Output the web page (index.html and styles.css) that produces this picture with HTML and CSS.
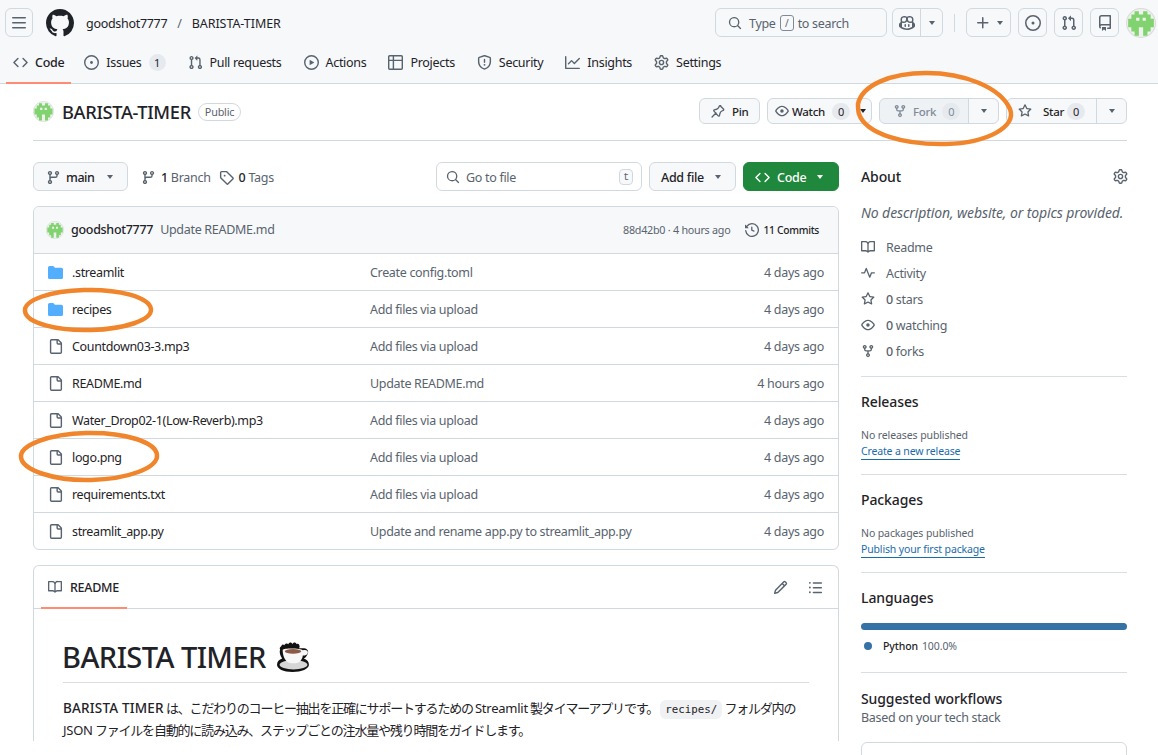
FILE: index.html
```html
<!DOCTYPE html>
<html lang="en">
<head>
<meta charset="utf-8">
<title>BARISTA-TIMER</title>
<link rel="stylesheet" href="styles.css">
</head>
<body>
<svg class="sprite" width="0" height="0" aria-hidden="true">
<defs>
<symbol id="i-bars" viewBox="0 0 16 16"><path d="M1 2.75A.75.75 0 0 1 1.75 2h12.5a.75.75 0 0 1 0 1.5H1.75A.75.75 0 0 1 1 2.75Zm0 5A.75.75 0 0 1 1.75 7h12.5a.75.75 0 0 1 0 1.5H1.75A.75.75 0 0 1 1 7.75ZM1.75 12h12.5a.75.75 0 0 1 0 1.5H1.75a.75.75 0 0 1 0-1.5Z"/></symbol>
<symbol id="i-github" viewBox="0 0 16 16"><path d="M8 0c4.42 0 8 3.58 8 8a8.013 8.013 0 0 1-5.45 7.59c-.4.08-.55-.17-.55-.38 0-.27.01-1.13.01-2.2 0-.75-.25-1.23-.54-1.48 1.78-.2 3.65-.88 3.65-3.95 0-.88-.31-1.59-.82-2.15.08-.2.36-1.02-.08-2.12 0 0-.67-.22-2.2.82-.64-.18-1.32-.27-2-.27-.68 0-1.36.09-2 .27-1.53-1.03-2.2-.82-2.2-.82-.44 1.1-.16 1.92-.08 2.12-.51.56-.82 1.28-.82 2.15 0 3.06 1.86 3.75 3.64 3.95-.23.2-.44.55-.51 1.07-.46.21-1.61.55-2.33-.66-.15-.24-.6-.83-1.23-.82-.67.01-.27.38.01.53.34.19.73.9.82 1.13.16.45.68 1.31 2.69.94 0 .67.01 1.3.01 1.49 0 .21-.15.45-.55.38A7.995 7.995 0 0 1 0 8c0-4.42 3.58-8 8-8Z"/></symbol>
<symbol id="i-code" viewBox="0 0 16 16"><path d="m11.28 3.22 4.25 4.25a.75.75 0 0 1 0 1.06l-4.25 4.25a.749.749 0 0 1-1.275-.326.749.749 0 0 1 .215-.734L13.94 8l-3.72-3.72a.749.749 0 0 1 .326-1.275.749.749 0 0 1 .734.215Zm-6.56 0a.751.751 0 0 1 1.042.018.751.751 0 0 1 .018 1.042L2.06 8l3.72 3.72a.749.749 0 0 1-.326 1.275.749.749 0 0 1-.734-.215L.47 8.53a.75.75 0 0 1 0-1.06Z"/></symbol>
<symbol id="i-issue" viewBox="0 0 16 16"><path d="M8 9.5a1.5 1.5 0 1 0 0-3 1.5 1.5 0 0 0 0 3Z"/><path d="M8 0a8 8 0 1 1 0 16A8 8 0 0 1 8 0ZM1.5 8a6.5 6.5 0 1 0 13 0 6.5 6.5 0 0 0-13 0Z"/></symbol>
<symbol id="i-pr" viewBox="0 0 16 16"><path d="M1.5 3.25a2.25 2.25 0 1 1 3 2.122v5.256a2.251 2.251 0 1 1-1.5 0V5.372A2.25 2.25 0 0 1 1.5 3.25Zm5.677-.177L9.573.677A.25.25 0 0 1 10 .854V2.5h1A2.5 2.5 0 0 1 13.5 5v5.628a2.251 2.251 0 1 1-1.5 0V5a1 1 0 0 0-1-1h-1v1.646a.25.25 0 0 1-.427.177L7.177 3.427a.25.25 0 0 1 0-.354ZM3.75 2.5a.75.75 0 1 0 0 1.5.75.75 0 0 0 0-1.5Zm0 9.5a.75.75 0 1 0 0 1.5.75.75 0 0 0 0-1.5Zm8.25.75a.75.75 0 1 0 1.5 0 .75.75 0 0 0-1.5 0Z"/></symbol>
<symbol id="i-play" viewBox="0 0 16 16"><path d="M8 0a8 8 0 1 1 0 16A8 8 0 0 1 8 0ZM1.5 8a6.5 6.5 0 1 0 13 0 6.5 6.5 0 0 0-13 0Zm4.879-2.773 4.264 2.559a.25.25 0 0 1 0 .428l-4.264 2.559A.25.25 0 0 1 6 10.559V5.442a.25.25 0 0 1 .379-.215Z"/></symbol>
<symbol id="i-table" viewBox="0 0 16 16"><path d="M0 1.75C0 .784.784 0 1.75 0h12.5C15.216 0 16 .784 16 1.75v12.5A1.75 1.75 0 0 1 14.25 16H1.75A1.75 1.75 0 0 1 0 14.25ZM6.5 6.5v8h7.75a.25.25 0 0 0 .25-.25V6.5Zm8-1.5V1.75a.25.25 0 0 0-.25-.25H6.5V5Zm-13 1.5v7.75c0 .138.112.25.25.25H5v-8ZM5 5V1.5H1.75a.25.25 0 0 0-.25.25V5Z"/></symbol>
<symbol id="i-shield" viewBox="0 0 16 16"><path d="M7.467.133a1.748 1.748 0 0 1 1.066 0l5.25 1.68A1.75 1.75 0 0 1 15 3.48V7c0 1.566-.32 3.182-1.303 4.682-.983 1.498-2.585 2.813-5.032 3.855a1.697 1.697 0 0 1-1.33 0c-2.447-1.042-4.049-2.357-5.032-3.855C1.32 10.182 1 8.566 1 7V3.48a1.75 1.75 0 0 1 1.217-1.667Zm.61 1.429a.25.25 0 0 0-.153 0l-5.25 1.68a.25.25 0 0 0-.174.238V7c0 1.358.275 2.666 1.057 3.86.784 1.194 2.121 2.34 4.366 3.297a.196.196 0 0 0 .154 0c2.245-.956 3.582-2.104 4.366-3.298C13.225 9.666 13.5 8.36 13.5 7V3.48a.251.251 0 0 0-.174-.237l-5.25-1.68ZM8.75 4.75v3a.75.75 0 0 1-1.5 0v-3a.75.75 0 0 1 1.5 0ZM9 10.5a1 1 0 1 1-2 0 1 1 0 0 1 2 0Z"/></symbol>
<symbol id="i-graph" viewBox="0 0 16 16"><path d="M1.5 1.75V13.5h13.75a.75.75 0 0 1 0 1.5H.75a.75.75 0 0 1-.75-.75V1.75a.75.75 0 0 1 1.5 0Zm14.28 2.53-5.25 5.25a.75.75 0 0 1-1.06 0L7 7.06 4.28 9.78a.751.751 0 0 1-1.042-.018.751.751 0 0 1-.018-1.042l3.25-3.25a.75.75 0 0 1 1.06 0L10 7.94l4.72-4.72a.751.751 0 0 1 1.042.018.751.751 0 0 1 .018 1.042Z"/></symbol>
<symbol id="i-gear" viewBox="0 0 16 16"><path d="M8 0a8.2 8.2 0 0 1 .701.031C9.444.095 9.99.645 10.16 1.29l.288 1.107c.018.066.079.158.212.224.231.114.454.243.668.386.123.082.233.09.299.071l1.103-.303c.644-.176 1.392.021 1.82.63.27.385.506.792.704 1.218.315.675.111 1.422-.364 1.891l-.814.806c-.049.048-.098.147-.088.294.016.257.016.515 0 .772-.01.147.038.246.088.294l.814.806c.475.469.679 1.216.364 1.891a7.977 7.977 0 0 1-.704 1.217c-.428.61-1.176.807-1.82.63l-1.102-.302c-.067-.019-.177-.011-.3.071a5.909 5.909 0 0 1-.668.386c-.133.066-.194.158-.211.224l-.29 1.106c-.168.646-.715 1.196-1.458 1.26a8.006 8.006 0 0 1-1.402 0c-.743-.064-1.289-.614-1.458-1.26l-.289-1.106c-.018-.066-.079-.158-.212-.224a5.738 5.738 0 0 1-.668-.386c-.123-.082-.233-.09-.299-.071l-1.103.303c-.644.176-1.392-.021-1.82-.63a8.12 8.12 0 0 1-.704-1.218c-.315-.675-.111-1.422.363-1.891l.815-.806c.05-.048.098-.147.088-.294a6.214 6.214 0 0 1 0-.772c.01-.147-.038-.246-.088-.294l-.815-.806C.635 6.045.431 5.298.746 4.623a7.92 7.92 0 0 1 .704-1.217c.428-.61 1.176-.807 1.82-.63l1.102.302c.067.019.177.011.3-.071.214-.143.437-.272.668-.386.133-.066.194-.158.211-.224l.29-1.106C6.009.645 6.556.095 7.299.03 7.53.01 7.764 0 8 0Zm-.571 1.525c-.036.003-.108.036-.137.146l-.289 1.105c-.147.561-.549.967-.998 1.189-.173.086-.34.183-.5.29-.417.278-.97.423-1.529.27l-1.103-.303c-.109-.03-.175.016-.195.045-.22.312-.412.644-.573.99-.014.031-.021.11.059.19l.815.806c.411.406.562.957.53 1.456a4.709 4.709 0 0 0 0 .582c.032.499-.119 1.05-.53 1.456l-.815.806c-.081.08-.073.159-.059.19.162.346.353.677.573.989.02.03.085.076.195.046l1.102-.303c.56-.153 1.113-.008 1.53.27.161.107.328.204.501.29.447.222.85.629.997 1.189l.289 1.105c.029.109.101.143.137.146a6.6 6.6 0 0 0 1.142 0c.036-.003.108-.036.137-.146l.289-1.105c.147-.561.549-.967.998-1.189.173-.086.34-.183.5-.29.417-.278.97-.423 1.529-.27l1.103.303c.109.029.175-.016.195-.045.22-.313.411-.644.573-.99.014-.031.021-.11-.059-.19l-.815-.806c-.411-.406-.562-.957-.53-1.456a4.709 4.709 0 0 0 0-.582c-.032-.499.119-1.05.53-1.456l.815-.806c.081-.08.073-.159.059-.19a6.464 6.464 0 0 0-.573-.989c-.02-.03-.085-.076-.195-.046l-1.102.303c-.56.153-1.113.008-1.53-.27a4.44 4.44 0 0 0-.501-.29c-.447-.222-.85-.629-.997-1.189l-.289-1.105c-.029-.11-.101-.143-.137-.146a6.6 6.6 0 0 0-1.142 0ZM11 8a3 3 0 1 1-6 0 3 3 0 0 1 6 0ZM9.5 8a1.5 1.5 0 1 0-3.001.001A1.5 1.5 0 0 0 9.5 8Z"/></symbol>
<symbol id="i-search" viewBox="0 0 16 16"><path d="M10.68 11.74a6 6 0 0 1-7.922-8.982 6 6 0 0 1 8.982 7.922l3.04 3.04a.749.749 0 0 1-.326 1.275.749.749 0 0 1-.734-.215ZM11.5 7a4.499 4.499 0 1 0-8.997 0A4.499 4.499 0 0 0 11.5 7Z"/></symbol>
<symbol id="i-plus" viewBox="0 0 16 16"><path d="M7.75 2a.75.75 0 0 1 .75.75V7h4.25a.75.75 0 0 1 0 1.5H8.5v4.25a.75.75 0 0 1-1.5 0V8.5H2.75a.75.75 0 0 1 0-1.5H7V2.75A.75.75 0 0 1 7.75 2Z"/></symbol>
<symbol id="i-repo" viewBox="0 0 16 16"><path d="M2 2.5A2.5 2.5 0 0 1 4.5 0h8.75a.75.75 0 0 1 .75.75v12.5a.75.75 0 0 1-.75.75h-2.5a.75.75 0 0 1 0-1.5h1.75v-2h-8a1 1 0 0 0-.714 1.7.75.75 0 1 1-1.072 1.05A2.495 2.495 0 0 1 2 11.5Zm10.5-1h-8a1 1 0 0 0-1 1v6.708A2.486 2.486 0 0 1 4.5 9h8ZM5 12.25a.25.25 0 0 1 .25-.25h3.5a.25.25 0 0 1 .25.25v3.25a.25.25 0 0 1-.4.2l-1.45-1.087a.249.249 0 0 0-.3 0L5.4 15.7a.25.25 0 0 1-.4-.2Z"/></symbol>
<symbol id="i-pin" viewBox="0 0 16 16"><path fill="none" stroke="currentColor" stroke-width="1.5" stroke-linecap="round" stroke-linejoin="round" d="M1.2 14.8 5.7 10.3M10.2 1.8l4 4c.5.5.4 1.3-.3 1.6l-1.4.6c-1.1.5-1.9 1.5-2.2 2.6l-.6 2.5c-.2.7-1 .9-1.5.4L3.4 8.1c-.5-.5-.3-1.3.4-1.5l2.5-.6c1.1-.3 2.1-1.1 2.6-2.2l.6-1.4c.3-.7 1.1-.8 1.7-.4Z"/></symbol>
<symbol id="i-eye" viewBox="0 0 16 16"><path d="M8 2c1.981 0 3.671.992 4.933 2.078 1.27 1.091 2.187 2.345 2.637 3.023a1.62 1.62 0 0 1 0 1.798c-.45.678-1.367 1.932-2.637 3.023C11.67 13.008 9.981 14 8 14c-1.981 0-3.671-.992-4.933-2.078C1.797 10.83.88 9.576.43 8.898a1.62 1.62 0 0 1 0-1.798c.45-.677 1.367-1.931 2.637-3.022C4.33 2.992 6.019 2 8 2ZM1.679 7.932a.12.12 0 0 0 0 .136c.411.622 1.241 1.75 2.366 2.717C5.176 11.758 6.527 12.5 8 12.5c1.473 0 2.825-.742 3.955-1.715 1.124-.967 1.954-2.096 2.366-2.717a.12.12 0 0 0 0-.136c-.412-.621-1.242-1.75-2.366-2.717C10.824 4.242 9.473 3.5 8 3.5c-1.473 0-2.825.742-3.955 1.715-1.124.967-1.954 2.096-2.366 2.717ZM8 10a2 2 0 1 1-.001-3.999A2 2 0 0 1 8 10Z"/></symbol>
<symbol id="i-fork" viewBox="0 0 16 16"><path d="M5 5.372v.878c0 .414.336.75.75.75h4.5a.75.75 0 0 0 .75-.75v-.878a2.25 2.25 0 1 1 1.5 0v.878a2.25 2.25 0 0 1-2.25 2.25h-1.5v2.128a2.251 2.251 0 1 1-1.5 0V8.5h-1.5A2.25 2.25 0 0 1 3.5 6.25v-.878a2.25 2.25 0 1 1 1.5 0ZM5 3.25a.75.75 0 1 0-1.5 0 .75.75 0 0 0 1.5 0Zm6.75.75a.75.75 0 1 0 0-1.5.75.75 0 0 0 0 1.5Zm-3 8.75a.75.75 0 1 0-1.5 0 .75.75 0 0 0 1.5 0Z"/></symbol>
<symbol id="i-star" viewBox="0 0 16 16"><path d="M8 .25a.75.75 0 0 1 .673.418l1.882 3.815 4.21.612a.75.75 0 0 1 .416 1.279l-3.046 2.97.719 4.192a.751.751 0 0 1-1.088.791L8 12.347l-3.766 1.98a.75.75 0 0 1-1.088-.79l.72-4.194L.818 6.374a.75.75 0 0 1 .416-1.28l4.21-.611L7.327.668A.75.75 0 0 1 8 .25Zm0 2.445L6.615 5.5a.75.75 0 0 1-.564.41l-3.097.45 2.24 2.184a.75.75 0 0 1 .216.664l-.528 3.084 2.769-1.456a.75.75 0 0 1 .698 0l2.77 1.456-.53-3.084a.75.75 0 0 1 .216-.664l2.24-2.183-3.096-.45a.75.75 0 0 1-.564-.41L8 2.694Z"/></symbol>
<symbol id="i-branch" viewBox="0 0 16 16"><path d="M9.5 3.25a2.25 2.25 0 1 1 3 2.122V6A2.5 2.5 0 0 1 10 8.5H6a1 1 0 0 0-1 1v1.128a2.251 2.251 0 1 1-1.5 0V5.372a2.25 2.25 0 1 1 1.5 0v1.836A2.493 2.493 0 0 1 6 7h4a1 1 0 0 0 1-1v-.628A2.25 2.25 0 0 1 9.5 3.25Zm-6 0a.75.75 0 1 0 1.5 0 .75.75 0 0 0-1.5 0Zm8.25-.75a.75.75 0 1 0 0 1.5.75.75 0 0 0 0-1.5ZM4.25 12a.75.75 0 1 0 0 1.5.75.75 0 0 0 0-1.5Z"/></symbol>
<symbol id="i-tag" viewBox="0 0 16 16"><path d="M1 7.775V2.75C1 1.784 1.784 1 2.75 1h5.025c.464 0 .91.184 1.238.513l6.25 6.25a1.75 1.75 0 0 1 0 2.474l-5.026 5.026a1.75 1.75 0 0 1-2.474 0l-6.25-6.25A1.752 1.752 0 0 1 1 7.775Zm1.5 0c0 .066.026.13.073.177l6.25 6.25a.25.25 0 0 0 .354 0l5.025-5.025a.25.25 0 0 0 0-.354l-6.25-6.25a.25.25 0 0 0-.177-.073H2.75a.25.25 0 0 0-.25.25ZM6 5a1 1 0 1 1 0 2 1 1 0 0 1 0-2Z"/></symbol>
<symbol id="i-history" viewBox="0 0 16 16"><path d="m.427 1.927 1.215 1.215a8.002 8.002 0 1 1-1.6 5.685.75.75 0 1 1 1.493-.154 6.5 6.5 0 1 0 1.18-4.458l1.358 1.358A.25.25 0 0 1 3.896 6H.25A.25.25 0 0 1 0 5.75V2.104a.25.25 0 0 1 .427-.177ZM7.75 4a.75.75 0 0 1 .75.75v2.992l2.028.812a.75.75 0 0 1-.557 1.392l-2.5-1A.751.751 0 0 1 7 8.25v-3.5A.75.75 0 0 1 7.75 4Z"/></symbol>
<symbol id="i-folder" viewBox="0 0 16 16"><path d="M1.75 1A1.75 1.75 0 0 0 0 2.75v10.5C0 14.216.784 15 1.75 15h12.5A1.75 1.75 0 0 0 16 13.25v-8.5A1.75 1.75 0 0 0 14.25 3H7.5a.25.25 0 0 1-.2-.1l-.9-1.2C6.07 1.26 5.55 1 5 1H1.75Z"/></symbol>
<symbol id="i-file" viewBox="0 0 16 16"><path d="M2 1.75C2 .784 2.784 0 3.75 0h6.586c.464 0 .909.184 1.237.513l2.914 2.914c.329.328.513.773.513 1.237v9.586A1.75 1.75 0 0 1 13.25 16h-9.5A1.75 1.75 0 0 1 2 14.25Zm1.75-.25a.25.25 0 0 0-.25.25v12.5c0 .138.112.25.25.25h9.5a.25.25 0 0 0 .25-.25V6h-2.75A1.75 1.75 0 0 1 9 4.25V1.5Zm6.75.062V4.25c0 .138.112.25.25.25h2.688l-.011-.013-2.914-2.914-.013-.011Z"/></symbol>
<symbol id="i-book" viewBox="0 0 16 16"><path d="M0 1.75A.75.75 0 0 1 .75 1h4.253c1.227 0 2.317.59 3 1.501A3.743 3.743 0 0 1 11.006 1h4.245a.75.75 0 0 1 .75.75v10.5a.75.75 0 0 1-.75.75h-4.507a2.25 2.25 0 0 0-1.591.659l-.622.621a.75.75 0 0 1-1.06 0l-.622-.621A2.25 2.25 0 0 0 5.258 13H.75a.75.75 0 0 1-.75-.75Zm7.251 10.324.004-5.073-.002-2.253A2.25 2.25 0 0 0 5.003 2.5H1.5v9h3.757a3.75 3.75 0 0 1 1.994.574ZM8.755 4.75l-.004 7.322a3.752 3.752 0 0 1 1.992-.572H14.5v-9h-3.495a2.25 2.25 0 0 0-2.25 2.25Z"/></symbol>
<symbol id="i-pulse" viewBox="0 0 16 16"><path d="M6 2c.306 0 .582.187.696.471L10 10.731l1.304-3.26A.751.751 0 0 1 12 7h3.25a.75.75 0 0 1 0 1.5h-2.742l-1.812 4.528a.751.751 0 0 1-1.392 0L6 4.77 4.696 8.03A.75.75 0 0 1 4 8.5H.75a.75.75 0 0 1 0-1.5h2.742l1.812-4.529A.751.751 0 0 1 6 2Z"/></symbol>
<symbol id="i-pencil" viewBox="0 0 16 16"><path d="M11.013 1.427a1.75 1.75 0 0 1 2.474 0l1.086 1.086a1.75 1.75 0 0 1 0 2.474l-8.61 8.61c-.21.21-.47.364-.756.445l-3.251.93a.75.75 0 0 1-.927-.928l.929-3.25c.081-.286.235-.547.445-.758l8.61-8.61Zm.176 4.823L9.75 4.81l-6.286 6.287a.253.253 0 0 0-.064.108l-.558 1.953 1.953-.558a.253.253 0 0 0 .108-.064Zm1.238-3.763a.25.25 0 0 0-.354 0L10.811 3.75l1.439 1.44 1.263-1.263a.25.25 0 0 0 0-.354Z"/></symbol>
<symbol id="i-list" viewBox="0 0 16 16"><path d="M5.75 2.5h8.5a.75.75 0 0 1 0 1.5h-8.5a.75.75 0 0 1 0-1.5Zm0 5h8.5a.75.75 0 0 1 0 1.5h-8.5a.75.75 0 0 1 0-1.5Zm0 5h8.5a.75.75 0 0 1 0 1.5h-8.5a.75.75 0 0 1 0-1.5ZM2 14a1 1 0 1 1 0-2 1 1 0 0 1 0 2Zm1-6a1 1 0 1 1-2 0 1 1 0 0 1 2 0ZM2 4a1 1 0 1 1 0-2 1 1 0 0 1 0 2Z"/></symbol>
<symbol id="i-copilot" viewBox="0 0 16 16"><path d="M7.998 15.035c-4.562 0-7.873-2.914-7.998-3.749V9.338c.085-.628.677-1.686 1.588-2.065.013-.07.024-.143.036-.218.029-.183.06-.384.126-.612-.201-.508-.254-1.084-.254-1.656 0-.87.128-1.769.693-2.484.579-.733 1.494-1.124 2.724-1.261 1.206-.134 2.262.034 2.944.765.05.053.096.108.139.165.044-.057.094-.112.143-.165.682-.731 1.738-.899 2.944-.765 1.23.137 2.145.528 2.724 1.261.566.715.693 1.614.693 2.484 0 .572-.053 1.148-.254 1.656.066.228.098.429.126.612.012.076.024.148.037.218.924.385 1.522 1.471 1.591 2.095v1.872c0 .766-3.351 3.795-8.002 3.795Zm0-1.485c2.28 0 4.584-1.11 5.002-1.433V7.862l-.023-.116c-.49.21-1.075.291-1.727.291-1.146 0-2.059-.327-2.71-.991A3.222 3.222 0 0 1 8 6.303a3.24 3.24 0 0 1-.544.743c-.65.664-1.563.991-2.71.991-.652 0-1.236-.081-1.727-.291l-.023.116v4.255c.419.323 2.722 1.433 5.002 1.433ZM6.762 2.83c-.193-.206-.637-.413-1.682-.297-1.019.113-1.479.404-1.713.7-.247.312-.369.789-.369 1.554 0 .793.129 1.171.308 1.371.162.181.519.379 1.442.379.853 0 1.339-.235 1.638-.54.315-.322.527-.827.617-1.553.117-.935-.037-1.395-.241-1.614Zm4.155-.297c-1.044-.116-1.488.091-1.681.297-.204.219-.359.679-.242 1.614.091.726.303 1.231.618 1.553.299.305.784.54 1.638.54.922 0 1.28-.198 1.442-.379.179-.2.308-.578.308-1.371 0-.765-.123-1.242-.37-1.554-.233-.296-.693-.587-1.713-.7Z"/><path d="M6.25 9.037a.75.75 0 0 1 .75.75v1.501a.75.75 0 0 1-1.5 0V9.787a.75.75 0 0 1 .75-.75Zm4.25.75v1.501a.75.75 0 0 1-1.5 0V9.787a.75.75 0 0 1 1.5 0Z"/></symbol>
<symbol id="i-avatar" viewBox="0 0 28 28"><circle cx="14" cy="14" r="13.500" fill="#eef1ee" stroke="#d9dcd9"/><path fill="#80d36f" d="M8 3h4v3h4V3h4v3h3v4h3v8h-3v4h-3v4h-4v-8h-4v8H8v-4H5v-4H2v-8h3V6h3Z"/><path fill="#eef1ee" d="M9.500 9h3v3h-3ZM15.500 9h3v3h-3Z"/></symbol>
</defs>
</svg>

<header class="app-head">
  <div class="top-bar">
    <div class="top-left">
      <button class="ghost-btn hamburger"><svg class="ic"><use href="#i-bars"/></svg></button>
      <svg class="gh-logo"><use href="#i-github"/></svg>
      <nav class="crumbs"><span>goodshot7777</span><span class="slash">/</span><strong>BARISTA-TIMER</strong></nav>
    </div>
    <div class="top-right">
      <div class="search-box"><svg class="ic"><use href="#i-search"/></svg><span>Type</span><kbd>/</kbd><span>to search</span></div>
      <div class="split-top"><span class="st-main"><svg class="ic"><use href="#i-copilot"/></svg></span><span class="st-caret"><i class="caret"></i></span></div>
      <span class="vr"></span>
      <div class="plus-btn"><svg class="ic"><use href="#i-plus"/></svg><i class="caret"></i></div>
      <div class="icon-btn"><svg class="ic"><use href="#i-issue"/></svg></div>
      <div class="icon-btn"><svg class="ic"><use href="#i-pr"/></svg></div>
      <div class="icon-btn"><svg class="ic"><use href="#i-repo"/></svg></div>
      <svg class="avatar-lg"><use href="#i-avatar"/></svg>
    </div>
  </div>
  <nav class="repo-tabs">
    <a class="tab active"><svg class="ic"><use href="#i-code"/></svg><span>Code</span></a>
    <a class="tab"><svg class="ic"><use href="#i-issue"/></svg><span>Issues</span><b class="count">1</b></a>
    <a class="tab"><svg class="ic"><use href="#i-pr"/></svg><span>Pull requests</span></a>
    <a class="tab"><svg class="ic"><use href="#i-play"/></svg><span>Actions</span></a>
    <a class="tab"><svg class="ic"><use href="#i-table"/></svg><span>Projects</span></a>
    <a class="tab"><svg class="ic"><use href="#i-shield"/></svg><span>Security</span></a>
    <a class="tab"><svg class="ic"><use href="#i-graph"/></svg><span>Insights</span></a>
    <a class="tab"><svg class="ic"><use href="#i-gear"/></svg><span>Settings</span></a>
  </nav>
</header>

<main class="page">
  <section class="repo-head">
    <div class="repo-title">
      <svg class="avatar-md"><use href="#i-avatar"/></svg>
      <strong>BARISTA-TIMER</strong>
      <span class="public">Public</span>
    </div>
    <div class="repo-actions">
      <div class="rbtn pin"><svg class="ic"><use href="#i-pin"/></svg><span>Pin</span></div>
      <div class="rbtn watch"><svg class="ic"><use href="#i-eye"/></svg><span>Watch</span><b class="count">0</b><i class="caret"></i></div>
      <div class="rsplit disabled"><div class="rmain"><svg class="ic"><use href="#i-fork"/></svg><span>Fork</span><b class="count">0</b></div><div class="rcaret"><i class="caret"></i></div></div>
      <div class="rsplit star"><div class="rmain"><svg class="ic"><use href="#i-star"/></svg><span>Star</span><b class="count">0</b></div><div class="rcaret"><i class="caret"></i></div></div>
    </div>
  </section>

  <div class="columns">
    <div class="main-col">
      <div class="toolbar">
        <div class="tb-left">
          <div class="btn branch-btn"><svg class="ic"><use href="#i-branch"/></svg><strong>main</strong><i class="caret"></i></div>
          <span class="meta"><svg class="ic"><use href="#i-branch"/></svg><b>1</b> Branch</span>
          <span class="meta tags"><svg class="ic"><use href="#i-tag"/></svg><b>0</b> Tags</span>
        </div>
        <div class="tb-right">
          <div class="goto"><svg class="ic"><use href="#i-search"/></svg><span>Go to file</span><kbd>t</kbd></div>
          <div class="btn add-file"><strong>Add file</strong><i class="caret"></i></div>
          <div class="btn code-btn"><svg class="ic"><use href="#i-code"/></svg><strong>Code</strong><i class="caret"></i></div>
        </div>
      </div>

      <section class="files">
        <div class="commit-row">
          <svg class="avatar-sm"><use href="#i-avatar"/></svg>
          <strong class="author">goodshot7777</strong>
          <span class="msg">Update README.md</span>
          <span class="hash">88d42b0 · 4 hours ago</span>
          <span class="commits"><svg class="ic"><use href="#i-history"/></svg><b>11 Commits</b></span>
        </div>
        <div class="row"><svg class="ic folder"><use href="#i-folder"/></svg><span class="name">.streamlit</span><span class="cmsg">Create config.toml</span><span class="when">4 days ago</span></div>
        <div class="row"><svg class="ic folder"><use href="#i-folder"/></svg><span class="name">recipes</span><span class="cmsg">Add files via upload</span><span class="when">4 days ago</span></div>
        <div class="row"><svg class="ic file"><use href="#i-file"/></svg><span class="name">Countdown03-3.mp3</span><span class="cmsg">Add files via upload</span><span class="when">4 days ago</span></div>
        <div class="row"><svg class="ic file"><use href="#i-file"/></svg><span class="name">README.md</span><span class="cmsg">Update README.md</span><span class="when">4 hours ago</span></div>
        <div class="row"><svg class="ic file"><use href="#i-file"/></svg><span class="name">Water_Drop02-1(Low-Reverb).mp3</span><span class="cmsg">Add files via upload</span><span class="when">4 days ago</span></div>
        <div class="row"><svg class="ic file"><use href="#i-file"/></svg><span class="name">logo.png</span><span class="cmsg">Add files via upload</span><span class="when">4 days ago</span></div>
        <div class="row"><svg class="ic file"><use href="#i-file"/></svg><span class="name">requirements.txt</span><span class="cmsg">Add files via upload</span><span class="when">4 days ago</span></div>
        <div class="row"><svg class="ic file"><use href="#i-file"/></svg><span class="name">streamlit_app.py</span><span class="cmsg">Update and rename app.py to streamlit_app.py</span><span class="when">4 days ago</span></div>
      </section>

      <section class="readme">
        <div class="readme-head">
          <div class="readme-tab"><svg class="ic"><use href="#i-book"/></svg><span>README</span></div>
          <div class="readme-tools"><svg class="ic"><use href="#i-pencil"/></svg><svg class="ic"><use href="#i-list"/></svg></div>
        </div>
        <article class="readme-body">
          <h1><span class="h1-text">BARISTA TIMER</span>
            <svg class="cup" viewBox="0 0 34 30" aria-label="coffee">
              <path fill="#111" d="M5 5c1-2 2-2 3-1 1-2 3-2 4-1 1-2 3-2 4 0 1-2 3-2 4 0 2-1 3 1 3 3l-1 1h4c4 0 6 2 5 5-1 2-2 4-4 5 3 1 5 3 5 6 0 4-7 7-16 7S1 27 1 23c0-3 2-5 5-6-2-3-3-6-2-9-1-1 0-2 1-3Z"/>
              <ellipse cx="17" cy="23" rx="13.500" ry="4.600" fill="#d6d6d6"/>
              <path fill="#f7f7f7" d="M6.500 8.500c0 5 1.500 9.500 4.500 11.500 3 2 9 2 12 0 2-2 3-4 3-6 3 0 5-1 5-3s-2-3-5-2c-1-2-18-2.500-19.500-.5Z"/>
              <ellipse cx="16.500" cy="10" rx="8" ry="2.300" fill="#8a5a44"/>
            </svg>
          </h1>
          <p><strong>BARISTA TIMER</strong> は、こだわりのコーヒー抽出を正確にサポートするための <span class="lat">Streamlit</span> 製タイマーアプリです。 <code>recipes/</code> フォルダ内の <span class="lat">JSON</span> ファイルを自動的に読み込み、ステップごとの注水量や残り時間をガイドします。</p>
        </article>
      </section>
    </div>

    <aside class="side">
      <section class="about">
        <div class="about-head"><h2>About</h2><svg class="ic"><use href="#i-gear"/></svg></div>
        <p class="desc">No description, website, or topics provided.</p>
        <ul class="stats">
          <li><svg class="ic"><use href="#i-book"/></svg><span>Readme</span></li>
          <li><svg class="ic"><use href="#i-pulse"/></svg><span>Activity</span></li>
          <li><svg class="ic"><use href="#i-star"/></svg><span><b>0</b> stars</span></li>
          <li><svg class="ic"><use href="#i-eye"/></svg><span><b>0</b> watching</span></li>
          <li><svg class="ic"><use href="#i-fork"/></svg><span><b>0</b> forks</span></li>
        </ul>
      </section>
      <section class="block">
        <h2>Releases</h2>
        <div class="small">No releases published</div>
        <a class="small link">Create a new release</a>
      </section>
      <section class="block">
        <h2>Packages</h2>
        <div class="small">No packages published</div>
        <a class="small link">Publish your first package</a>
      </section>
      <section class="block langs">
        <h2>Languages</h2>
        <div class="lang-bar"></div>
        <div class="lang-item"><i class="dot"></i><strong>Python</strong><span>100.0%</span></div>
      </section>
      <section class="block workflows">
        <h2>Suggested workflows</h2>
        <div class="based">Based on your tech stack</div>
        <div class="wf-card"></div>
      </section>
    </aside>
  </div>
</main>

<svg class="scribble" viewBox="0 0 1158 755" aria-hidden="true">
  <path d="M858 104c4-19 33-31 68-31 38 0 74 14 84 36 7 18-23 34-64 35-42 1-80-10-87-30-1-3-1-7-1-10Z"/>
  <path d="M25 311c-1-11 25-20 59-21 35-1 65 7 67 19 1 11-26 20-60 21-34 1-65-7-66-19Z"/>
  <path d="M21 457c-1-12 28-23 65-24 38-1 70 9 71 22 1 13-29 24-66 25-37 1-69-10-70-23Z"/>
</svg>
</body>
</html>
```
FILE: styles.css
```css
* { box-sizing: border-box; }
html, body { margin: 0; padding: 0; }
body {
  width: 1158px;
  height: 755px;
  overflow: hidden;
  position: relative;
  background: #fff;
  color: #1f2328;
  font-family: "Noto Sans", "Noto Sans CJK JP", sans-serif;
  font-size: 12.500px;
  letter-spacing: -0.3px;
}
.sprite { position: absolute; }
.ic { width: 16px; height: 16px; fill: currentColor; flex: none; display: block; }
strong, b { font-weight: 500; }
.caret { width: 0; height: 0; border-left: 3.500px solid transparent; border-right: 3.500px solid transparent; border-top: 4px solid currentColor; display: block; flex: none; }

/* header */
.app-head { height: 84px; background: #f6f8fa; border-bottom: 1px solid #d1d9e0; }
.top-bar { height: 42px; padding: 8px 2px 0 5px; display: flex; justify-content: space-between; }
.top-left, .top-right { display: flex; align-items: center; height: 29px; }
.ghost-btn { width: 28px; height: 29px; padding: 0; background: transparent; border: 1px solid #d1d9e0; border-radius: 6px; color: #59636e; display: flex; align-items: center; justify-content: center; }
.gh-logo { width: 28px; height: 28px; fill: #1f2328; margin-left: 13px; }
.crumbs { display: flex; align-items: center; margin-left: 12px; padding-top: 2px; font-size: 12.500px; color: #1f2328; }
.crumbs .slash { margin: 0 10px; color: #59636e; }
.crumbs strong { font-weight: 400; letter-spacing: -0.05px; }
.search-box { width: 172px; height: 29px; border: 1px solid #d1d9e0; border-radius: 6px; display: flex; align-items: center; padding: 1px 0 0 12px; color: #59636e; gap: 4px; }
.search-box kbd { width: 14px; height: 16px; border: 1px solid #818b98; border-radius: 3px; font-family: inherit; font-size: 10px; display: flex; align-items: center; justify-content: center; }
.search-box .ic { width: 14px; height: 14px; margin-right: 3px; }
.split-top { display: flex; height: 29px; width: 51px; margin-left: 5px; border: 1px solid #d1d9e0; border-radius: 6px; color: #59636e; }
.st-main { width: 28px; display: flex; align-items: center; justify-content: center; border-right: 1px solid #d1d9e0; }
.st-caret { flex: 1; display: flex; align-items: center; justify-content: center; }
.vr { width: 1px; height: 18px; background: #d1d9e0; margin: 0 11px; }
.plus-btn { width: 45px; height: 29px; border: 1px solid #d1d9e0; border-radius: 6px; display: flex; align-items: center; justify-content: center; gap: 6px; color: #59636e; }
.icon-btn { width: 29px; height: 29px; margin-left: 7px; border: 1px solid #d1d9e0; border-radius: 6px; display: flex; align-items: center; justify-content: center; color: #59636e; }
.avatar-lg { width: 30px; height: 30px; margin-left: 7px; }
.repo-tabs { height: 41px; padding-left: 6px; display: flex; align-items: flex-start; }
.tab { height: 41px; display: flex; align-items: center; gap: 7px; padding: 0 7px; margin-right: 8px; color: #1f2328; position: relative; }
.tab .ic { color: #59636e; width: 15px; height: 15px; }
.tab.active { font-weight: 500; margin-right: 6px; }
.tab.active::after { content: ""; position: absolute; left: 0; right: 0; bottom: -1px; height: 2px; background: #fd8c73; }
.count { display: inline-flex; align-items: center; justify-content: center; min-width: 17px; height: 17px; padding: 0 5px; border-radius: 9px; background: #e6eaef; font-size: 11px; color: #1f2328; font-weight: 400; }

/* page */
.page { padding: 14px 31px 0 33px; }
.repo-head { height: 43px; border-bottom: 1px solid #d1d9e0; display: flex; justify-content: space-between; }
.repo-title { display: flex; align-items: flex-start; height: 28px; }
.avatar-md { width: 21px; height: 21px; margin-top: 3px; }
.repo-title strong { margin-left: 8px; font-size: 18.300px; line-height: 27px; font-weight: 500; letter-spacing: -0.35px; }
.public { margin: 5px 0 0 7px; height: 18px; padding: 0 6px; border: 1px solid #d1d9e0; border-radius: 9px; font-size: 10.800px; line-height: 16px; color: #59636e; letter-spacing: -0.2px; }
.repo-actions { display: flex; height: 26px; gap: 7px; }
.rbtn, .rsplit { height: 26px; border: 1px solid #d1d9e0; border-radius: 6px; background: #f6f8fa; display: flex; align-items: center; font-size: 11.500px; font-weight: 500; }
.rbtn .ic, .rmain .ic { width: 14px; height: 14px; color: #59636e; }
.pin { width: 61px; padding-left: 11px; gap: 7px; }
.watch { width: 105px; padding-left: 7px; gap: 3px; }
.watch .count { margin-left: 4px; width: 18px; }
.watch .caret { margin-left: 7px; }
.rmain { height: 24px; width: 90px; display: flex; align-items: center; border-right: 1px solid #d1d9e0; }
.rcaret { display: flex; align-items: center; justify-content: center; width: 29px; color: #59636e; }
.disabled { color: #818b98; background: #eff2f5; width: 120px; }
.disabled .rmain { padding-left: 13px; gap: 6px; }
.disabled .rcaret { color: #59636e; background: #f6f8fa; height: 24px; border-radius: 0 6px 6px 0; }
.disabled .count { color: #818b98; width: 18px; }
.disabled .rmain .ic { color: #818b98; }
.star { width: 121px; }
.star .rmain { width: 91px; padding-left: 11px; gap: 11px; }
.star .count { margin-left: -8px; width: 18px; }

.columns { display: flex; gap: 22px; padding-top: 21px; }
.main-col { width: 806px; flex: none; }
.toolbar { display: flex; justify-content: space-between; height: 29px; }
.tb-left, .tb-right { display: flex; align-items: center; }
.btn { height: 29px; border: 1px solid #d1d9e0; border-radius: 6px; background: #f6f8fa; display: flex; align-items: center; padding-top: 1px; }
.branch-btn { width: 95px; padding-left: 12px; gap: 5px; }
.branch-btn strong { letter-spacing: -0.45px; }
.branch-btn .ic { color: #59636e; width: 15px; height: 15px; }
.branch-btn .caret { margin-left: 8px; color: #59636e; }
.meta { display: flex; align-items: center; color: #59636e; margin-left: 13px; gap: 3px; padding-top: 1px; }
.meta b { color: #1f2328; }
.meta .ic { margin-right: 2px; width: 15px; height: 15px; }
.tags { margin-left: 8px; }
.goto { width: 206px; height: 29px; border: 1px solid #d1d9e0; border-radius: 6px; display: flex; align-items: center; padding: 1px 0 0 9px; color: #59636e; gap: 6px; }
.goto .ic { width: 14px; height: 14px; }
.goto kbd { margin-left: auto; margin-right: 8px; width: 14px; height: 16px; border: 1px solid #d1d9e0; border-radius: 4px; background: #f6f8fa; font-family: "Liberation Mono", monospace; font-size: 10px; display: flex; align-items: center; justify-content: center; }
.add-file { width: 87px; margin-left: 7px; padding-left: 11px; gap: 11px; }
.add-file .caret { color: #59636e; }
.code-btn { width: 96px; margin-left: 7px; padding-left: 11px; gap: 7px; background: #1f883d; border-color: #1f883d; color: #fff; }
.code-btn .ic { width: 15px; height: 15px; }
.code-btn .caret { margin-left: 4px; }

.files { margin-top: 15px; border: 1px solid #d1d9e0; border-radius: 6px; }
.commit-row { height: 46px; background: #f6f8fa; border-radius: 6px 6px 0 0; display: flex; align-items: center; padding: 0 19px 1px 11px; }
.avatar-sm { width: 18px; height: 18px; flex: none; margin-left: 1px; }
.author { margin-left: 7px; font-size: 12.500px; }
.msg { margin-left: 7px; color: #59636e; font-size: 12.500px; }
.hash { margin-left: auto; font-size: 10.750px; color: #59636e; letter-spacing: -0.25px; }
.commits { margin-left: 15px; display: flex; align-items: center; gap: 4px; font-size: 10.300px; letter-spacing: -0.3px; }
.commits .ic { width: 14px; height: 14px; color: #59636e; }
.row { height: 37px; border-top: 1px solid #d1d9e0; display: flex; align-items: center; padding: 0 14px 0 14px; }
.row .ic { color: #59636e; width: 15px; height: 15px; }
.row .ic.folder { color: #54aeff; }
.name { width: 298px; margin-left: 9px; flex: none; letter-spacing: -0.35px; }
.cmsg { color: #59636e; letter-spacing: -0.33px; }
.when { margin-left: auto; color: #59636e; }

.readme { margin-top: 15px; border: 1px solid #d1d9e0; border-bottom: 0; border-radius: 6px 6px 0 0; }
.readme-head { height: 43px; border-bottom: 1px solid #d1d9e0; display: flex; justify-content: space-between; align-items: center; padding: 0 15px 0 7px; position: relative; }
.readme-tab { height: 43px; width: 86px; padding: 1px 0 0 7px; display: flex; align-items: center; gap: 8px; border-bottom: 2px solid #fd8c73; font-weight: 500; font-size: 12.500px; margin-bottom: -1px; }
.readme-tab .ic { color: #59636e; width: 14px; height: 14px; }
.readme-tools { display: flex; gap: 20px; color: #59636e; }
.readme-tools .ic { width: 15px; height: 15px; }
.readme-body { padding: 27px 29px 0; }
.readme-body h1 { margin: 0; height: 47px; padding-bottom: 5px; border-bottom: 1px solid #d8dee4; font-size: 29px; line-height: 38px; font-weight: 500; letter-spacing: -0.55px; display: flex; align-items: center; gap: 10px; }
.h1-text { margin-left: -1px; }
.cup { width: 35px; height: 31px; flex: none; }
.readme-body p { margin: 14px 0 0; font-size: 13px; line-height: 22px; letter-spacing: -1.2px; }
.readme-body p strong { font-size: 13.500px; letter-spacing: 0.2px; }
.lat { letter-spacing: -0.25px; }
.readme-body code { font-family: "DejaVu Sans Mono", monospace; font-size: 10.800px; line-height: 1; padding: 3px 5px; border-radius: 6px; background: #eff1f3; letter-spacing: 0; }

/* sidebar */
.side { width: 266px; flex: none; }
.side h2 { margin: 0; font-size: 14px; font-weight: 500; line-height: 20px; letter-spacing: -0.1px; }
.about-head { display: flex; justify-content: space-between; align-items: center; height: 29px; }
.about-head .ic { color: #59636e; margin-right: -1px; width: 15px; height: 15px; }
.desc { margin: 12px 0 0; font-style: italic; font-size: 14px; color: #59636e; line-height: 20px; letter-spacing: -0.1px; white-space: nowrap; }
.stats { list-style: none; margin: 11px 0 0; padding: 0 0 12px; border-bottom: 1px solid #d8dee4; }
.stats li { height: 26px; display: flex; align-items: center; gap: 11px; color: #59636e; }
.stats .ic { width: 14px; height: 14px; }
.stats b { font-weight: 500; }
.block { padding-top: 15px; height: 98px; border-bottom: 1px solid #d8dee4; }
.small { display: block; font-size: 10.500px; line-height: 16px; color: #59636e; letter-spacing: -0.1px; }
.block h2 + .small { margin-top: 15px; }
.link { display: table; margin-top: 1px; color: #1a6ca8; border-bottom: 1px solid #1a6ca8; line-height: 15px; letter-spacing: -0.15px; }
.langs { height: 100px; }
.lang-bar { height: 7px; margin-top: 15px; border-radius: 4px; background: #3572a5; }
.lang-item { display: flex; align-items: center; margin-top: 9px; font-size: 10.500px; line-height: 14px; padding-left: 3px; letter-spacing: -0.1px; }
.lang-item .dot { width: 8px; height: 8px; border-radius: 50%; background: #3572a5; margin-right: 11px; }
.lang-item span { margin-left: 4px; color: #59636e; }
.workflows { border-bottom: 0; padding-top: 16px; height: auto; }
.based { color: #59636e; line-height: 18px; }
.wf-card { margin-top: 15px; height: 60px; border: 1px solid #d1d9e0; border-radius: 6px; }

/* hand-drawn annotation over the screenshot */
.scribble { position: absolute; left: 0; top: 0; width: 1158px; height: 755px; pointer-events: none; }
.scribble path { fill: none; stroke: #f0852c; stroke-width: 4.500px; }
```
